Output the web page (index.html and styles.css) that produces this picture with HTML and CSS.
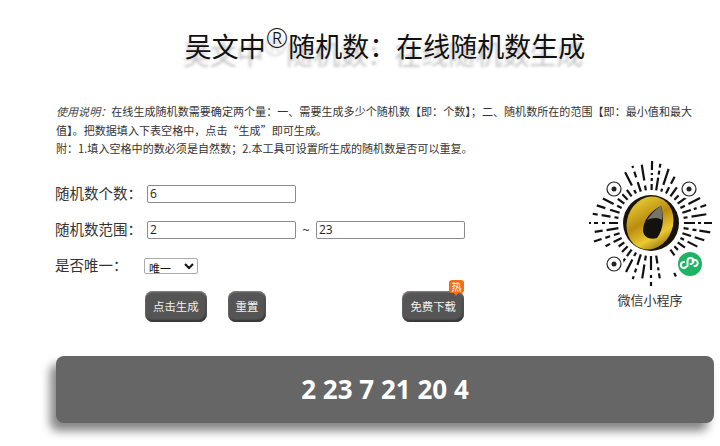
FILE: index.html
```html
<!DOCTYPE html>
<html lang="zh">
<head>
<meta charset="utf-8">
<title>在线随机数生成</title>
<link rel="stylesheet" href="styles.css">
</head>
<body>
<div class="page">
  <h1 class="title">吴文中<sup class="reg">®</sup>随机数&#xFF1A;在线随机数生成</h1>
  <div class="desc">
    <p><em>使用说明&#xFF1A;</em>在线生成随机数需要确定两个量&#xFF1A;一、需要生成多少个随机数【即&#xFF1A;个数】&#xFF1B;二、随机数所在的范围【即&#xFF1A;最小值和最大值】。把数据填入下表空格中&#xFF0C;点击&#x201C;生成&#x201D;即可生成。</p>
    <p>附&#xFF1A;1.填入空格中的数必须是自然数&#xFF1B;2.本工具可设置所生成的随机数是否可以重复。</p>
  </div>
  <div class="main">
    <form class="form">
      <div class="row">
        <label class="label">随机数个数&#xFF1A;</label>
        <input class="field" type="text" value="6">
      </div>
      <div class="row">
        <label class="label">随机数范围&#xFF1A;</label>
        <input class="field" type="text" value="2">
        <span class="tilde">~</span>
        <input class="field" type="text" value="23">
      </div>
      <div class="row">
        <label class="label label-short">是否唯一&#xFF1A;</label>
        <select class="pick"><option>唯一</option><option>可重复</option></select>
      </div>
      <div class="actions">
        <button class="btn" type="button">点击生成</button>
        <button class="btn" type="button">重置</button>
        <button class="btn btn-download" type="button">免费下载<span class="hot">热</span></button>
      </div>
    </form>
    <aside class="qr">
      <svg class="qr-code" width="130" height="130" viewBox="0 0 130 130">
        <g class="rays">
          <line x1="65" y1="32" x2="65" y2="3" stroke-dasharray="6 3 3 3 2 3 12" transform="rotate(1 65 65)"/>
          <line x1="65" y1="32" x2="65" y2="5" stroke-dasharray="13 3 4 3 4" transform="rotate(9 65 65)"/>
          <line x1="65" y1="32" x2="65" y2="8" stroke-dasharray="3 4 17" transform="rotate(18 65 65)"/>
          <line x1="65" y1="32" x2="65" y2="13" stroke-dasharray="7 4 8" transform="rotate(27 65 65)"/>
          <line x1="65" y1="32" x2="65" y2="21" transform="rotate(36 65 65)"/>
          <line x1="65" y1="32" x2="65" y2="26" transform="rotate(45 65 65)"/>
          <line x1="65" y1="32" x2="65" y2="20" transform="rotate(54 65 65)"/>
          <line x1="65" y1="32" x2="65" y2="10" stroke-dasharray="5 4 13" transform="rotate(63 65 65)"/>
          <line x1="65" y1="32" x2="65" y2="7" stroke-dasharray="9 3 3 4 9" transform="rotate(72 65 65)"/>
          <line x1="65" y1="32" x2="65" y2="9" stroke-dasharray="4 4 15" transform="rotate(81 65 65)"/>
          <line x1="65" y1="32" x2="65" y2="4" stroke-dasharray="11 3 3 3 9" transform="rotate(90 65 65)"/>
          <line x1="65" y1="32" x2="65" y2="5" stroke-dasharray="5 4 4 3 11" transform="rotate(99 65 65)"/>
          <line x1="65" y1="32" x2="65" y2="9" stroke-dasharray="9 4 10" transform="rotate(108 65 65)"/>
          <line x1="65" y1="32" x2="65" y2="13" stroke-dasharray="4 4 11" transform="rotate(117 65 65)"/>
          <line x1="65" y1="32" x2="65" y2="23" transform="rotate(126 65 65)"/>
          <line x1="65" y1="32" x2="65" y2="27" transform="rotate(135 65 65)"/>
          <line x1="65" y1="32" x2="65" y2="25" transform="rotate(144 65 65)"/>
          <line x1="65" y1="32" x2="65" y2="6" stroke-dasharray="0 22 9" transform="rotate(155 65 65)"/>
          <line x1="65" y1="32" x2="65" y2="9" stroke-dasharray="8 4 3 3 5" transform="rotate(171 65 65)"/>
          <line x1="65" y1="32" x2="65" y2="2" stroke-dasharray="14 5 3 4 4" transform="rotate(180 65 65)"/>
          <line x1="65" y1="32" x2="65" y2="8" stroke-dasharray="5 4 14" transform="rotate(189 65 65)"/>
          <line x1="65" y1="32" x2="65" y2="6" stroke-dasharray="11 4 4 4 6" transform="rotate(198 65 65)"/>
          <line x1="65" y1="32" x2="65" y2="10" stroke-dasharray="4 4 15" transform="rotate(207 65 65)"/>
          <line x1="65" y1="32" x2="65" y2="14" stroke-dasharray="8 3 7" transform="rotate(216 65 65)"/>
          <line x1="65" y1="32" x2="65" y2="24" transform="rotate(225 65 65)"/>
          <line x1="65" y1="32" x2="65" y2="25" transform="rotate(234 65 65)"/>
          <line x1="65" y1="32" x2="65" y2="14" stroke-dasharray="9 4 6" transform="rotate(243 65 65)"/>
          <line x1="65" y1="32" x2="65" y2="5" stroke-dasharray="6 4 5 4 11" transform="rotate(252 65 65)"/>
          <line x1="65" y1="32" x2="65" y2="8" stroke-dasharray="12 4 8" transform="rotate(261 65 65)"/>
          <line x1="65" y1="32" x2="65" y2="3" stroke-dasharray="9 4 3 4 4 3 2 3 4" transform="rotate(270 65 65)"/>
          <line x1="65" y1="32" x2="65" y2="6" stroke-dasharray="4 4 9 4 5" transform="rotate(279 65 65)"/>
          <line x1="65" y1="32" x2="65" y2="8" stroke-dasharray="10 5 10" transform="rotate(288 65 65)"/>
          <line x1="65" y1="32" x2="65" y2="11" stroke-dasharray="5 4 12" transform="rotate(297 65 65)"/>
          <line x1="65" y1="32" x2="65" y2="14" stroke-dasharray="8 4 6" transform="rotate(306 65 65)"/>
          <line x1="65" y1="32" x2="65" y2="22" transform="rotate(315 65 65)"/>
          <line x1="65" y1="32" x2="65" y2="14" stroke-dasharray="8 13" transform="rotate(324 65 65)"/>
          <line x1="65" y1="32" x2="65" y2="8" stroke-dasharray="4 5 15" transform="rotate(333 65 65)"/>
          <line x1="65" y1="32" x2="65" y2="5" stroke-dasharray="10 5 6 4 5" transform="rotate(342 65 65)"/>
          <line x1="65" y1="32" x2="65" y2="6" stroke-dasharray="5 5 16" transform="rotate(351 65 65)"/>
        </g>
        <g class="finder">
          <circle class="knock" cx="28" cy="31" r="10"/><circle cx="28" cy="31" r="7"/><circle class="dot" cx="28" cy="31" r="2.500"/>
          <circle class="knock" cx="103" cy="31" r="10"/><circle cx="103" cy="31" r="7"/><circle class="dot" cx="103" cy="31" r="2.500"/>
          <circle class="knock" cx="28" cy="106" r="10"/><circle cx="28" cy="106" r="7"/><circle class="dot" cx="28" cy="106" r="2.500"/>
        </g>
        <defs>
          <linearGradient id="gold" x1="0" y1="0" x2="1" y2="1">
            <stop offset="0" stop-color="#f6e040"/>
            <stop offset="0.45" stop-color="#b98c10"/>
            <stop offset="0.7" stop-color="#ecc830"/>
            <stop offset="1" stop-color="#6b4e08"/>
          </linearGradient>
        </defs>
        <circle cx="65" cy="65" r="28" fill="#17130a"/>
        <ellipse cx="64" cy="65" rx="23" ry="27" fill="url(#gold)" transform="rotate(20 64 65)"/>
        <path d="M57 73C57 62 65 53 75 48C78 58 78 71 71 80C65 82 58 80 57 73Z" fill="#14120e"/>
        <path d="M61 62C65 56 70 51 75 48C76 53 77 58 76 62C71 59 66 60 61 62Z" fill="#77746c"/>
        <circle cx="104" cy="106" r="12" fill="#1fb364"/>
        <path class="mp" d="M100 109a3 3 0 1 1-2-5M101.500 108v-5a3 3 0 1 1 3 3M106.500 103a3 3 0 1 1 2 5"/>
      </svg>
      <div class="qr-caption">微信小程序</div>
    </aside>
  </div>
  <div class="result">2 23 7 21 20 4</div>
</div>
</body>
</html>
```
FILE: styles.css
```css
* { box-sizing: border-box; }
html, body { margin: 0; background: #fff; }
body {
  font-family: "Open Sans", "Noto Sans CJK SC", sans-serif;
  color: #222;
  height: 446px;
  overflow: hidden;
}
.page { padding: 27px 6px 0 56px; }
.title {
  margin: 0;
  height: 40px;
  line-height: 40px;
  font-size: 27px;
  font-weight: 400;
  color: #111;
  text-align: center;
  white-space: nowrap;
  text-shadow: -2px 8px 3px #c4c4c4;
}
.reg { font-size: 27px; font-weight: 300; line-height: 0; vertical-align: 9px; }
.desc {
  margin-top: 35px;
  height: 55px;
  font-family: "Noto Sans CJK SC", sans-serif;
  font-size: 11.070px;
  line-height: 18.500px;
  color: #333;
}
.desc p { margin: 0; }
.desc em { color: #444; }
.main { display: flex; justify-content: space-between; margin-right: -1px; }
.form { padding-top: 27.500px; width: 430px; }
.row { display: flex; align-items: center; height: 18px; margin-bottom: 18px; font-size: 14.500px; color: #333; }
.label { width: 92px; margin-left: -1px; flex: none; white-space: nowrap; position: relative; top: -1px; }
.label-short { width: 89px; }
.field {
  width: 149px;
  height: 18px;
  padding: 0 2px;
  border: 1px solid #8b8b8b;
  border-radius: 2px;
  font: 12px "Open Sans", sans-serif;
  color: #222;
  background: #fff;
}
.tilde { width: 20px; text-align: center; font-size: 13px; }
.pick {
  width: 54px;
  height: 16px;
  padding: 0;
  border: 1px solid #aaa;
  border-radius: 2px;
  font: 11px "Noto Sans CJK SC", sans-serif;
  color: #111;
  background: #fff;
}
.actions { display: flex; gap: 21px; padding: 0 0 0 89px; margin-top: -2px; }
.btn {
  position: relative;
  height: 31px;
  padding: 0 8px;
  border: 0;
  border-radius: 8px;
  background: #555;
  color: #f2f2f2;
  font: 11.400px "Noto Sans CJK SC", sans-serif;
  white-space: nowrap;
  box-shadow: inset 0 1px 2px #8c8c8c, inset -1px -2px 2px #333;
}
.btn-download { margin-left: 115px; }
.hot {
  position: absolute;
  top: -11px;
  right: 0;
  width: 15px;
  height: 13px;
  border-radius: 3px;
  background: #f0701a;
  color: #fff;
  font-size: 10px;
  line-height: 13px;
  text-align: center;
}
.hot::after {
  content: "";
  position: absolute;
  left: 4px;
  top: 12px;
  border: 3px solid transparent;
  border-top: 4px solid #f0701a;
  border-bottom: 0;
}
.qr { width: 130px; margin-top: 1px; text-align: center; }
.qr-code { display: block; margin-left: 1px; }
.rays line { stroke: #111; stroke-width: 2.200px; }
.finder circle { fill: none; stroke: #222; stroke-width: 1.200px; }
.finder .knock { fill: #fff; stroke: none; }
.finder .dot { fill: #222; stroke: none; }
.mp { fill: none; stroke: #fff; stroke-width: 2px; stroke-linecap: round; }
.qr-caption { margin-top: 2px; font-size: 13px; line-height: 20px; color: #333; }
.result {
  margin-top: 34px;
  height: 67px;
  line-height: 67px;
  border-radius: 8px;
  background: #666;
  color: #fff;
  font-size: 26px;
  font-weight: 700;
  text-align: center;
  box-shadow: -6px 8px 10px #888;
}
```
